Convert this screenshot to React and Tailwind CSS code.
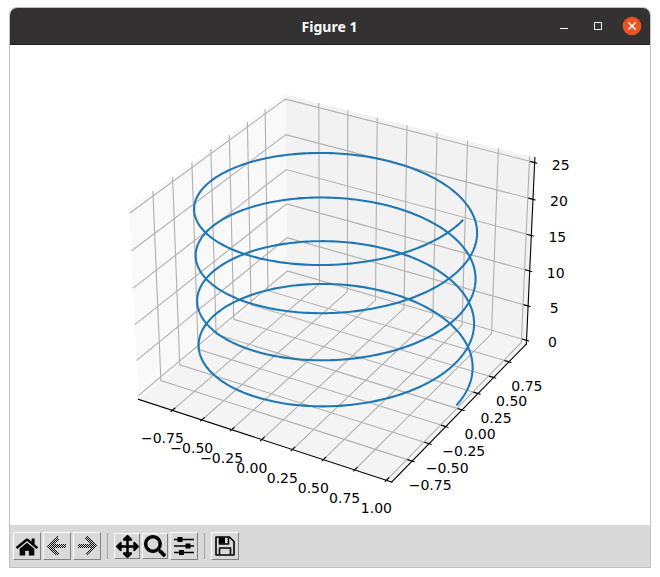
import { FaArrowsAlt, FaHome, FaSearch } from 'react-icons/fa'

// Camera: azimuth -60, elevation 30, looking at the centre of a 4:4:3 box
const SCALE = 2438
const CENTER = [326, 233.9]
const DIST = 10
const BOX = [1.1427, 1.1427, 0.857]
const LIMITS = [[-1, 1], [-1, 1], [0, 8 * Math.PI]]
const PAD = 1 / 48

const X_TICKS = [-0.75, -0.5, -0.25, 0, 0.25, 0.5, 0.75, 1]
const Y_TICKS = [-0.75, -0.5, -0.25, 0, 0.25, 0.5, 0.75]
const Z_TICKS = [0, 5, 10, 15, 20, 25]

// u, v, w run from 0 to 1 along each side of the box
function projectUnit(u, v, w) {
  const x = (u - 0.5) * BOX[0]
  const y = (v - 0.5) * BOX[1]
  const z = (w - 0.5) * BOX[2]
  const right = 0.866 * x + 0.5 * y
  const up = -0.25 * x + 0.433 * y + 0.866 * z
  const depth = DIST - (0.433 * x - 0.75 * y + 0.5 * z)
  return [CENTER[0] + (SCALE * right) / depth, CENTER[1] - (SCALE * up) / depth]
}

function toUnit(axis, value) {
  const [min, max] = LIMITS[axis]
  return (value - min) / (max - min)
}

function toPoints(list) {
  return list.map(p => projectUnit(...p).map(n => n.toFixed(2)).join(',')).join(' ')
}

const LO = -PAD
const HI = 1 + PAD
const OUT = HI + 0.1 / 12
const IN = HI - 0.2 / 12

const panes = [
  { fill: '#f9f9f9', points: [[LO, LO, LO], [LO, HI, LO], [LO, HI, HI], [LO, LO, HI]] },
  { fill: '#f2f2f2', points: [[LO, HI, LO], [HI, HI, LO], [HI, HI, HI], [LO, HI, HI]] },
  { fill: '#f4f4f4', points: [[LO, LO, LO], [HI, LO, LO], [HI, HI, LO], [LO, HI, LO]] },
]

const gridLines = [
  ...X_TICKS.map(t => toUnit(0, t)).map(u => [[u, LO, LO], [u, HI, LO], [u, HI, HI]]),
  ...Y_TICKS.map(t => toUnit(1, t)).map(v => [[HI, v, LO], [LO, v, LO], [LO, v, HI]]),
  ...Z_TICKS.map(t => toUnit(2, t)).map(w => [[LO, LO, w], [LO, HI, w], [HI, HI, w]]),
]

const axisLines = [
  [[LO, LO, LO], [HI, LO, LO]],
  [[HI, LO, LO], [HI, HI, LO]],
  [[HI, HI, LO], [HI, HI, HI]],
]

const tickMarks = [
  ...X_TICKS.map(t => toUnit(0, t)).map(u => [[u, 1 - OUT, LO], [u, 1 - IN, LO]]),
  ...Y_TICKS.map(t => toUnit(1, t)).map(v => [[OUT, v, LO], [IN, v, LO]]),
  ...Z_TICKS.map(t => toUnit(2, t)).map(w => [[OUT, HI, w], [IN, HI, w]]),
]

const formatTick = t => t.toFixed(2).replace('-', '\u2212')

function makeLabel(point, dx, dy, text) {
  const [x, y] = projectUnit(...point)
  return { x: x + dx, y: y + dy + 5, text }
}

const labels = [
  ...X_TICKS.map(t => makeLabel([toUnit(0, t), LO, LO], -10, 28, formatTick(t))),
  ...Y_TICKS.map(t => makeLabel([HI, toUnit(1, t), LO], 18, 24, formatTick(t))),
  ...Z_TICKS.map(t => makeLabel([HI, HI, toUnit(2, t)], 26, 2, String(t))),
]

const helix = Array.from({ length: 1000 }, (_, i) => {
  const t = (8 * Math.PI * i) / 999
  return [toUnit(0, Math.cos(t)), toUnit(1, Math.sin(t)), toUnit(2, t)]
})

export default function App() {
  return (
    <div className="min-h-screen bg-white px-[9px] pt-[7px] pb-2">
      <main className="overflow-hidden rounded-t-lg border border-[#c0c0c0] bg-white">
        <TitleBar title="Figure 1" />
        <HelixPlot />
        <Toolbar />
      </main>
    </div>
  )
}

function TitleBar({ title }) {
  return (
    <header className="grid h-[37px] grid-cols-[1fr_auto_1fr] items-center border-b border-[#1f1d1e] bg-[#343132] pr-px">
      <h1 className="col-start-2 pt-px font-['Noto_Sans',sans-serif] text-sm font-bold text-white">{title}</h1>
      <div className="flex justify-end">
        <WindowButton label="Minimize">
          <path d="M6 12.5h8" stroke="#fff" />
        </WindowButton>
        <WindowButton label="Maximize">
          <path d="M6.5 6.5h7v7h-7z" stroke="#fff" fill="none" />
        </WindowButton>
        <WindowButton label="Close">
          <circle cx="10" cy="10" r="9.3" fill="#e95420" />
          <path d="M6.5 6.5l7 7M13.5 6.5l-7 7" stroke="#fff" strokeWidth="1.5" />
        </WindowButton>
      </div>
    </header>
  )
}

function WindowButton({ label, children }) {
  return (
    <button type="button" aria-label={label} className="flex h-9 w-[34px] items-center justify-center">
      <svg viewBox="0 0 20 20" className="size-5">{children}</svg>
    </button>
  )
}

function HelixPlot() {
  return (
    <svg viewBox="0 0 640 480" className="block w-full" role="img">
      {panes.map(pane => (
        <polygon key={pane.fill} points={toPoints(pane.points)} fill={pane.fill} />
      ))}
      <g fill="none" stroke="#b0b0b0" strokeWidth="1.11">
        {gridLines.map((line, i) => <polyline key={i} points={toPoints(line)} />)}
      </g>
      <g fill="none" stroke="#000" strokeWidth="1.11" strokeLinecap="square">
        {axisLines.map((line, i) => <polyline key={i} points={toPoints(line)} />)}
        {tickMarks.map((line, i) => <polyline key={i} points={toPoints(line)} />)}
      </g>
      <polyline
        points={toPoints(helix)}
        fill="none"
        stroke="#1f77b4"
        strokeWidth="2.08"
        strokeLinecap="square"
        strokeLinejoin="round"
      />
      <g className="font-['DejaVu_Sans',sans-serif] text-[14px]" textAnchor="middle">
        {labels.map((label, i) => (
          <text key={i} x={label.x} y={label.y}>{label.text}</text>
        ))}
      </g>
    </svg>
  )
}

function Toolbar() {
  return (
    <div role="toolbar" className="flex items-center gap-0.5 bg-[#d9d9d9] px-[3px] py-[7px]">
      <ToolButton label="Home"><FaHome className="mt-0.5 size-[22px]" /></ToolButton>
      <ToolButton label="Back" disabled><ArrowIcon /></ToolButton>
      <ToolButton label="Forward" disabled><ArrowIcon flip /></ToolButton>
      <Separator />
      <ToolButton label="Pan" small><FaArrowsAlt className="size-[23px]" /></ToolButton>
      <ToolButton label="Zoom" small><FaSearch className="size-[22px]" /></ToolButton>
      <ToolButton label="Configure subplots"><SlidersIcon /></ToolButton>
      <Separator />
      <ToolButton label="Save"><SaveIcon /></ToolButton>
    </div>
  )
}

function ToolButton({ label, small, disabled, children }) {
  return (
    <button
      type="button"
      aria-label={label}
      disabled={disabled}
      className={`flex items-center justify-center border border-t-white border-r-[#828282] border-b-[#828282] border-l-white text-black ${small ? 'size-[26px]' : 'size-7'}`}
    >
      {children}
    </button>
  )
}

function Separator() {
  return <div className="mx-1 h-[26px] w-px bg-[#a3a3a3]" />
}

function ArrowIcon({ flip }) {
  const id = flip ? 'stipple-forward' : 'stipple-back'
  return (
    <svg viewBox="0 0 20 20" className="size-5" shapeRendering="crispEdges">
      <defs>
        <pattern id={id} width="2" height="2" patternUnits="userSpaceOnUse">
          <path d="M0 0h1v1H0zM1 1h1v1H1z" />
        </pattern>
      </defs>
      <path
        d={flip
          ? 'M9 0.5l2-0.5L20 10l-9 9.5-2-0.5-1-2 5-5H1V8h12L8 3z'
          : 'M11 0.5L9 0 0 10l9 9.5 2-0.5 1-2-5-5h12V8H7l5-5z'}
        fill={`url(#${id})`}
      />
    </svg>
  )
}

function SlidersIcon() {
  return (
    <svg viewBox="0 0 20 20" className="size-5">
      <path d="M0 3.5h20M0 10h20M0 16.5h20" stroke="#000" strokeWidth="1.6" />
      <path d="M3.5 1h5v5h-5zM11.5 7.5h5v5h-5zM5 14h5v5H5z" />
    </svg>
  )
}

function SaveIcon() {
  return (
    <svg viewBox="0 0 20 20" className="size-5" fill="none" stroke="#000" strokeWidth="1.6" strokeLinejoin="round">
      <path d="M1 1h13.5L19 5.5V19H1z" />
      <path d="M4.5 1v7h9V1" />
      <path d="M4.5 19v-7h11v7" />
      <path d="M5 1.5h5v6H5z" fill="#000" stroke="none" />
    </svg>
  )
}
